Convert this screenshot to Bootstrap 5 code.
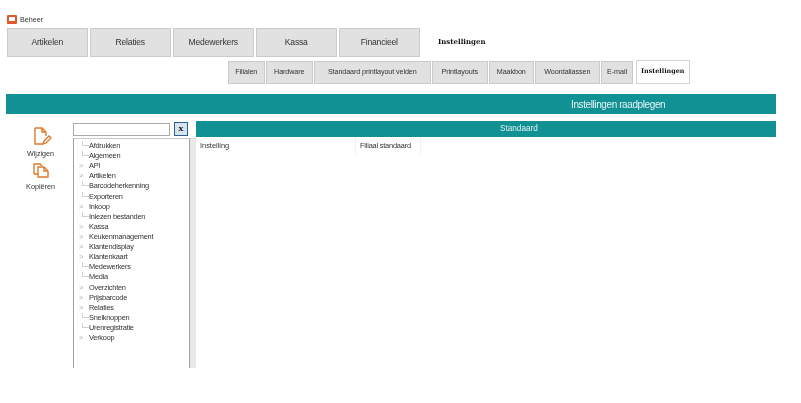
<!DOCTYPE html>
<html lang="en">

<head>
    <meta charset="UTF-8">
    <meta name="viewport" content="width=device-width, initial-scale=1.0">
    <title>Beheer</title>
    <link href="https://cdn.jsdelivr.net/npm/bootstrap@5.3.0/dist/css/bootstrap.min.css" rel="stylesheet">
    <style>
        body {
            background: #fff;
            color: #333;
            font-family: "Liberation Sans", sans-serif;
            font-size: 7.2px;
            overflow: hidden;
            height: 403px;
            padding: 15px 25px 0 6px;
            filter: blur(0.3px);
        }

        .title-row {
            height: 13px;
            padding-left: 1px;
            gap: 3px;
            align-items: flex-start;
            line-height: 10px;
        }

        .logo-box {
            width: 10px;
            height: 9px;
            background: #e2582a;
            border-radius: 1px;
            padding: 2px 2px 3px;
        }

        .logo-box span {
            display: block;
            height: 100%;
            background: #fff;
        }

        .main-tabs {
            padding-left: 1px;
            gap: 2.5px;
            height: 29px;
        }

        .main-tab {
            width: 80.5px;
            background: #e1e1e1;
            border: 1px solid #cbcbcb;
            font-size: 8.6px;
            letter-spacing: -0.2px;
            display: flex;
            align-items: center;
            justify-content: center;
        }

        .main-active {
            font-family: "DejaVu Serif", serif;
            font-weight: 700;
            color: #111;
            font-size: 7px;
            padding-left: 16px;
            display: flex;
            align-items: center;
        }

        .sub-tabs {
            margin-top: 3px;
            padding-left: 222px;
            gap: 1.5px;
            height: 24px;
        }

        .sub-tab {
            background: #e1e1e1;
            border: 1px solid #cbcbcb;
            font-size: 7.2px;
            letter-spacing: -0.1px;
            margin-top: 1px;
            display: flex;
            align-items: center;
            justify-content: center;
        }

        .sub-active {
            background: #fff;
            border: 1px solid #d4d4d4;
            margin-top: 0;
            margin-left: 1.5px;
            font-family: "DejaVu Serif", serif;
            font-weight: 700;
            font-size: 6.4px;
            letter-spacing: 0;
            color: #111;
        }

        .w-filialen { width: 36.5px; }
        .w-hardware { width: 46.5px; }
        .w-standaard { width: 116.5px; }
        .w-printlayouts { width: 55.5px; }
        .w-maakbon { width: 44.5px; }
        .w-woord { width: 64.5px; }
        .w-email { width: 32px; }
        .w-instellingen { width: 53.5px; }

        .teal-bar {
            background: #129195;
            color: #e6f4f4;
            margin-top: 10px;
            height: 20px;
            font-size: 10px;
            letter-spacing: -0.4px;
            padding-left: 565px;
            display: flex;
            align-items: center;
        }

        .work-area {
            margin-top: 7px;
            height: 248px;
        }

        .action-col {
            width: 67px;
            padding-top: 6px;
            padding-left: 2px;
        }

        .action-item {
            width: 100%;
            line-height: 9px;
        }

        .icon-edit {
            margin: 0 0 3px 5px;
        }

        .icon-copy {
            margin: 5px 0 4px 1px;
        }

        .tree-col {
            width: 123px;
        }

        .search-row {
            height: 17px;
            padding-top: 2px;
            gap: 4px;
        }

        .search-box {
            width: 97px;
            height: 13px;
            border: 1px solid #aaa;
        }

        .clear-btn {
            width: 14px;
            height: 14px;
            margin-top: -1px;
            background: #d5e3f0;
            border: 1px solid #2f5f8f;
            font-family: "DejaVu Serif", serif;
            font-weight: 700;
            font-size: 8px;
            line-height: 11px;
            text-align: center;
            color: #222;
        }

        .tree-box {
            height: 230px;
            border-top: 1px solid #c8c8c8;
            border-left: 1px solid #a0a0a0;
            border-right: 6px solid #e8e8e8;
            box-shadow: inset -1px 0 0 #a0a0a0;
            padding-top: 2px;
        }

        .tree-row {
            height: 10.12px;
            line-height: 10px;
            font-size: 7.4px;
            letter-spacing: -0.25px;
        }

        .tree-mark {
            width: 15px;
            padding-left: 5px;
            color: #aaa;
            flex: none;
        }

        .tree-line {
            width: 7px;
            height: 5px;
            margin-left: 8px;
            flex: none;
            border-left: 1px solid #d0d0d0;
            border-bottom: 1px solid #d0d0d0;
        }

        .data-col {
            width: 580px;
        }

        .data-head {
            background: #129195;
            color: #dff0f0;
            height: 16px;
            line-height: 16px;
            padding-left: 304px;
            font-size: 8.2px;
        }

        .data-row {
            height: 17px;
            align-items: center;
            font-size: 7.4px;
        }

        .cell-name {
            width: 160px;
            padding-left: 4px;
            height: 100%;
            line-height: 18px;
            border-right: 1px solid #f0f0f0;
        }

        .cell-value {
            width: 65px;
            padding-left: 4px;
            height: 100%;
            line-height: 18px;
            letter-spacing: -0.2px;
            border-right: 1px solid #f0f0f0;
        }
    </style>
</head>

<body>
    <div class="title-row d-flex">
        <div class="logo-box"><span></span></div>
        <div>Beheer</div>
    </div>

    <!-- Top tabs -->
    <div class="main-tabs d-flex">
        <div class="main-tab">Artikelen</div>
        <div class="main-tab">Relaties</div>
        <div class="main-tab">Medewerkers</div>
        <div class="main-tab">Kassa</div>
        <div class="main-tab">Financieel</div>
        <div class="main-active">Instellingen</div>
    </div>

    <div class="sub-tabs d-flex">
        <div class="sub-tab w-filialen">Filialen</div>
        <div class="sub-tab w-hardware">Hardware</div>
        <div class="sub-tab w-standaard">Standaard printlayout velden</div>
        <div class="sub-tab w-printlayouts">Printlayouts</div>
        <div class="sub-tab w-maakbon">Maakbon</div>
        <div class="sub-tab w-woord">Woordaliassen</div>
        <div class="sub-tab w-email">E-mail</div>
        <div class="sub-tab sub-active w-instellingen">Instellingen</div>
    </div>

    <div class="teal-bar">Instellingen raadplegen</div>

    <div class="work-area d-flex">
        <div class="action-col">
            <div class="action-item d-flex flex-column align-items-center">
                <svg class="icon-edit" width="18" height="19" viewBox="0 0 18 19" fill="none" stroke="#e07a2c" stroke-width="1.4">
                    <path d="M1 1h7l4 4v4M8 1v4h4M1 1v16h8" />
                    <path d="M9 17l1-3 5-5 2 2-5 5z" />
                </svg>
                <div>Wijzigen</div>
            </div>
            <div class="action-item d-flex flex-column align-items-center">
                <svg class="icon-copy" width="16" height="15" viewBox="0 0 16 15" fill="none" stroke="#e07a2c" stroke-width="1.4">
                    <path d="M1 11V1h6l2 2M1 11h4" />
                    <path d="M5 4h6l4 4v6H5z" />
                    <path d="M11 4v4h4" />
                </svg>
                <div>Kopiëren</div>
            </div>
        </div>

        <div class="tree-col">
            <div class="search-row d-flex">
                <div class="search-box"></div>
                <div class="clear-btn">x</div>
            </div>
            <div class="tree-box" id="tree"></div>
        </div>

        <div class="data-col">
            <div class="data-head">Standaard</div>
            <div class="data-row d-flex">
                <div class="cell-name">Instelling</div>
                <div class="cell-value">Filiaal standaard</div>
            </div>
        </div>
    </div>

    <script>
        // [name, has children]
        const items = [
            ['Afdrukken', 0], ['Algemeen', 0], ['API', 1], ['Artikelen', 1], ['Barcodeherkenning', 0],
            ['Exporteren', 0], ['Inkoop', 1], ['Inlezen bestanden', 0], ['Kassa', 1], ['Keukenmanagement', 1],
            ['Klantendisplay', 1], ['Klantenkaart', 1], ['Medewerkers', 0], ['Media', 0], ['Overzichten', 1],
            ['Prijsbarcode', 1], ['Relaties', 1], ['Snelknoppen', 0], ['Urenregistratie', 0], ['Verkoop', 1]
        ];
        const tree = document.getElementById('tree');
        items.forEach(function (item) {
            const row = document.createElement('div');
            row.className = 'tree-row d-flex';
            const mark = document.createElement('div');
            mark.className = item[1] ? 'tree-mark' : 'tree-line';
            mark.textContent = item[1] ? '>' : '';
            const label = document.createElement('span');
            label.textContent = item[0];
            row.appendChild(mark);
            row.appendChild(label);
            tree.appendChild(row);
        });
    </script>
    <script src="https://cdn.jsdelivr.net/npm/bootstrap@5.3.0/dist/js/bootstrap.bundle.min.js"></script>
</body>

</html>
